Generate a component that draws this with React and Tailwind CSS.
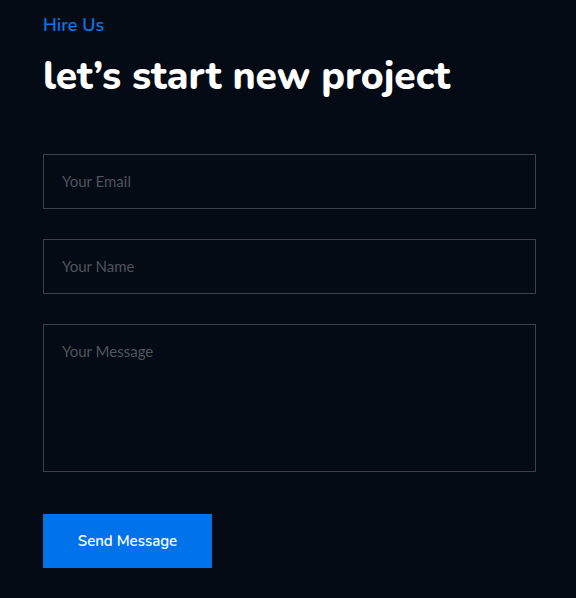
export default function App() {
  return (
    <div className="min-h-[598px] w-full bg-[#050b14] px-[43px] pt-[13px]">
      <div className="w-[493px]">
        <p className="text-[18px] leading-[24px] text-[#0a78e8] font-semibold font-['Nunito','Lato',sans-serif]">Hire Us</p>
        <h1 className="mt-[17px] text-[39px] leading-[46px] font-extrabold text-white font-['Nunito','Lato',sans-serif]">let’s start new project</h1>
        <form className="mt-[54px] flex flex-col" onSubmit={(e) => e.preventDefault()}>
          <input
            placeholder="Your Email"
            className="h-[55px] w-full border border-[#3b4049] bg-transparent px-[18px] pb-[2px] text-[15px] text-white placeholder:text-[#4e545d] outline-none font-['Lato',sans-serif]"
          />
          <input
            placeholder="Your Name"
            className="mt-[30px] h-[55px] w-full border border-[#3b4049] bg-transparent px-[18px] pb-[2px] text-[15px] text-white placeholder:text-[#4e545d] outline-none font-['Lato',sans-serif]"
          />
          <textarea
            placeholder="Your Message"
            className="mt-[30px] h-[148px] w-full resize-none border border-[#3b4049] bg-transparent px-[18px] pt-[15px] text-[15px] text-white placeholder:text-[#4e545d] outline-none font-['Lato',sans-serif]"
          />
          <button
            type="submit"
            className="mt-[42px] h-[54px] w-[169px] bg-[#0073ea] text-[15px] font-semibold text-white font-['Nunito','Lato',sans-serif]"
          >
            Send Message
          </button>
        </form>
      </div>
    </div>
  );
}
